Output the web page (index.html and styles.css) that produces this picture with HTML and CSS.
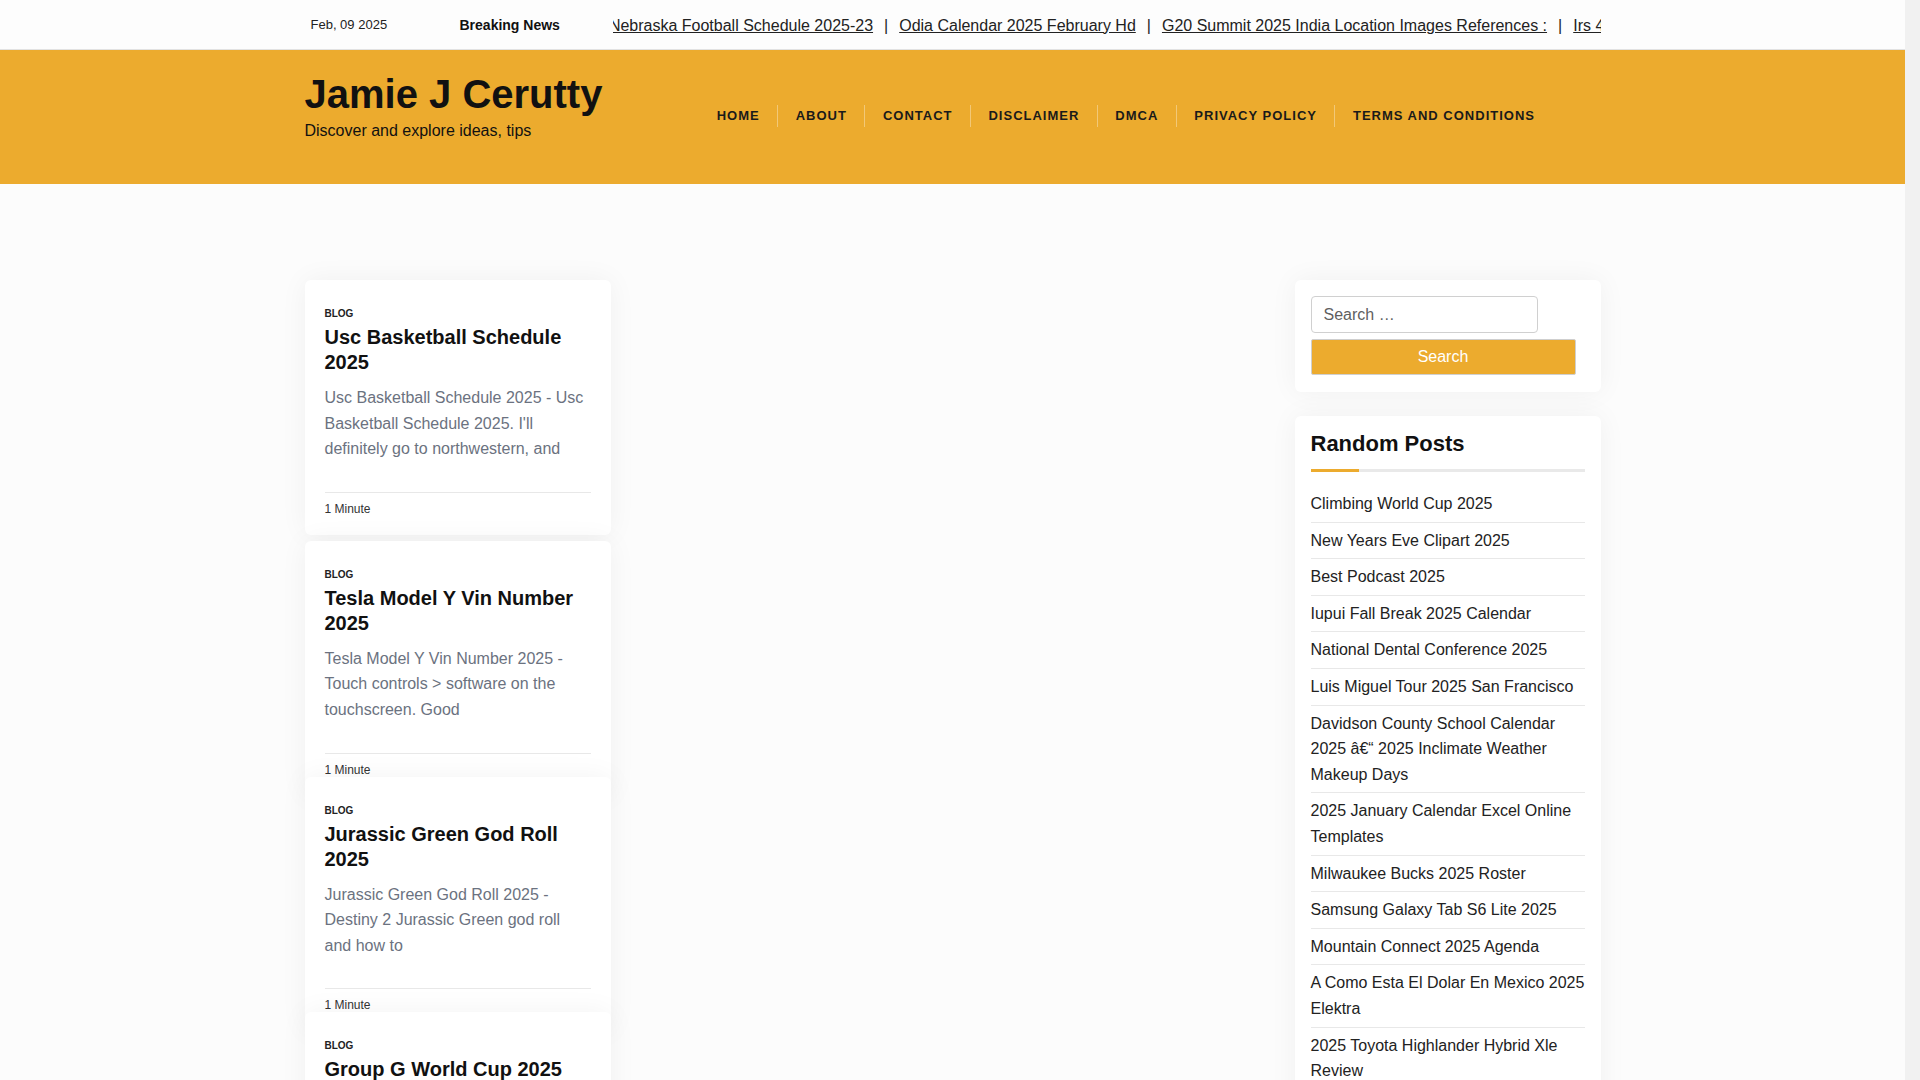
FILE: index.html
```html
<!DOCTYPE html>
<html lang="en">
<head>
<meta charset="utf-8">
<title>Jamie J Cerutty</title>
<link rel="stylesheet" href="styles.css">
</head>
<body>
<div class="topbar">
  <div class="container topbar-inner">
    <span class="date">Feb, 09 2025</span>
    <span class="breaking">Breaking News</span>
    <div class="ticker">
      <div class="ticker-track">
        <a href="#">Nebraska Football Schedule 2025-23</a><span class="sep">|</span>
        <a href="#">Odia Calendar 2025 February Hd</a><span class="sep">|</span>
        <a href="#">G20 Summit 2025 India Location Images References :</a><span class="sep">|</span>
        <a href="#">Irs 4868 Form 2025</a><span class="sep">|</span>
        <a href="#">Climbing World Cup 2025</a>
      </div>
    </div>
  </div>
</div>

<header class="masthead">
  <div class="container masthead-inner">
    <div class="brand">
      <div class="site-title">Jamie J Cerutty</div>
      <p class="tagline">Discover and explore ideas, tips</p>
    </div>
    <nav class="primary-nav">
      <ul>
        <li><a href="#">Home</a></li>
        <li><a href="#">About</a></li>
        <li><a href="#">Contact</a></li>
        <li><a href="#">Disclaimer</a></li>
        <li><a href="#">DMCA</a></li>
        <li><a href="#">Privacy Policy</a></li>
        <li><a href="#">Terms and Conditions</a></li>
      </ul>
    </nav>
  </div>
</header>

<main class="container content">
  <div class="posts">
    <article class="card">
      <span class="cat">Blog</span>
      <h2 class="card-title">Usc Basketball Schedule 2025</h2>
      <p class="excerpt">Usc Basketball Schedule 2025 - Usc Basketball Schedule 2025. I'll definitely go to northwestern, and</p>
      <div class="card-meta">1 Minute</div>
    </article>
    <article class="card">
      <span class="cat">Blog</span>
      <h2 class="card-title">Tesla Model Y Vin Number 2025</h2>
      <p class="excerpt">Tesla Model Y Vin Number 2025 - Touch controls &gt; software on the touchscreen. Good</p>
      <div class="card-meta">1 Minute</div>
    </article>
    <article class="card card--tucked">
      <span class="cat">Blog</span>
      <h2 class="card-title">Jurassic Green God Roll 2025</h2>
      <p class="excerpt">Jurassic Green God Roll 2025 - Destiny 2 Jurassic Green god roll and how to</p>
      <div class="card-meta">1 Minute</div>
    </article>
    <article class="card card--tucked">
      <span class="cat">Blog</span>
      <h2 class="card-title">Group G World Cup 2025</h2>
      <p class="excerpt">Group G World Cup 2025 - The full fixture list, kick-off times and venues for</p>
      <div class="card-meta">1 Minute</div>
    </article>
  </div>

  <aside class="sidebar">
    <section class="widget widget-search">
      <form class="search-form" action="#">
        <input class="search-field" type="search" placeholder="Search …">
        <button class="search-submit" type="button">Search</button>
      </form>
    </section>
    <section class="widget">
      <h2 class="widget-title">Random Posts</h2>
      <div class="widget-rule"></div>
      <ul class="post-list">
        <li><a href="#">Climbing World Cup 2025</a></li>
        <li><a href="#">New Years Eve Clipart 2025</a></li>
        <li><a href="#">Best Podcast 2025</a></li>
        <li><a href="#">Iupui Fall Break 2025 Calendar</a></li>
        <li><a href="#">National Dental Conference 2025</a></li>
        <li><a href="#">Luis Miguel Tour 2025 San Francisco</a></li>
        <li><a href="#">Davidson County School Calendar 2025 â€“ 2025 Inclimate Weather Makeup Days</a></li>
        <li><a href="#">2025 January Calendar Excel Online Templates</a></li>
        <li><a href="#">Milwaukee Bucks 2025 Roster</a></li>
        <li><a href="#">Samsung Galaxy Tab S6 Lite 2025</a></li>
        <li><a href="#">Mountain Connect 2025 Agenda</a></li>
        <li><a href="#">A Como Esta El Dolar En Mexico 2025 Elektra</a></li>
        <li><a href="#">2025 Toyota Highlander Hybrid Xle Review</a></li>
        <li><a href="#">Odia Calendar 2025 February Hd</a></li>
      </ul>
    </section>
  </aside>
</main>
</body>
</html>
```

FILE: styles.css
```css
/* the reference was captured with a 15px classic scrollbar gutter */
html {
  background: #f1f1f1;
}

body {
  margin: 0 15px 0 0;
  background: #fcfcfc;
  font-family: "Liberation Sans", Arial, sans-serif;
  color: #222;
}

.container {
  width: 1296px;
  margin: 0 auto;
}

/* top bar */
.topbar {
  background: #fdfdfd;
  border-bottom: 1px solid #e2e2e2;
}

.topbar-inner {
  display: flex;
  align-items: center;
  height: 49px;
}

.date {
  flex: 0 0 149px;
  margin-left: 6px;
  font-size: 13px;
  color: #222;
}

.breaking {
  flex: 0 0 auto;
  margin-right: 53px;
  font-size: 14px;
  font-weight: 700;
  color: #111;
}

.ticker {
  flex: 1;
  overflow: hidden;
  white-space: nowrap;
  padding-top: 2px;
}

.ticker-track {
  display: flex;
  margin-left: -4px;
}

.ticker-track a {
  flex: 0 0 auto;
  font-size: 16px;
  color: #222;
  text-decoration: underline;
}

.sep {
  flex: 0 0 auto;
  margin: 0 11px;
  font-size: 16px;
  color: #222;
}

/* masthead */
.masthead {
  background: #ecab2e;
  height: 134px;
}

.masthead-inner {
  display: flex;
  align-items: flex-start;
  padding-top: 20px;
}

.site-title {
  font-size: 40px;
  line-height: 48px;
  font-weight: 700;
  color: #111;
}

.tagline {
  margin: 3px 0 0;
  font-size: 16px;
  line-height: 20px;
  color: #111;
}

.primary-nav {
  margin-left: auto;
  margin-right: 48px;
  margin-top: 35px;
}

.primary-nav ul {
  display: flex;
  list-style: none;
  margin: 0;
  padding: 0;
}

.primary-nav li + li {
  border-left: 1px solid rgba(255, 255, 255, 0.35);
}

.primary-nav a {
  display: block;
  padding: 0 17.5px;
  line-height: 22px;
  font-size: 13px;
  font-weight: 700;
  letter-spacing: 1px;
  text-transform: uppercase;
  color: #1a1a1a;
  text-decoration: none;
}

/* content */
.content {
  display: flex;
  justify-content: space-between;
  align-items: flex-start;
  padding-top: 96px;
  padding-bottom: 40px;
}

.posts {
  width: 306px;
  display: flex;
  flex-direction: column;
}

.card {
  position: relative;
  background: #fff;
  border-radius: 6px;
  box-shadow: 0 0 28px rgba(0, 0, 0, 0.05);
  padding: 27px 20px 19px;
}

.card + .card {
  margin-top: 6px;
}

.card.card--tucked {
  margin-top: -19px;
}

.cat {
  display: block;
  font-size: 10px;
  line-height: 13px;
  font-weight: 700;
  text-transform: uppercase;
  color: #222;
}

.card-title {
  margin: 5px 0 0;
  font-size: 20px;
  line-height: 25px;
  font-weight: 700;
  color: #111;
}

.excerpt {
  margin: 10px 0 30px;
  font-size: 16px;
  line-height: 25.6px;
  color: #6b7280;
}

.card-meta {
  border-top: 1px solid #e8e8e8;
  padding-top: 9px;
  font-size: 12px;
  line-height: 14px;
  color: #333;
}

/* sidebar */
.sidebar {
  width: 306px;
}

.widget {
  background: #fff;
  border-radius: 6px;
  box-shadow: 0 0 28px rgba(0, 0, 0, 0.05);
  padding: 15px 16px 17px;
}

.widget-search {
  padding-top: 16px;
}

.widget + .widget {
  margin-top: 24px;
}

.search-field {
  display: block;
  box-sizing: border-box;
  width: 227px;
  height: 37px;
  padding: 0 12px;
  border: 1px solid #d0d0d0;
  border-radius: 4px;
  background: #fff;
  font-family: "Liberation Sans", Arial, sans-serif;
  font-size: 16px;
  color: #555;
}

.search-field::placeholder {
  color: #5f5f5f;
}

.search-submit {
  display: block;
  box-sizing: border-box;
  width: 265px;
  height: 36px;
  margin-top: 6px;
  border: 1px solid #cfcfcf;
  border-radius: 2px;
  background: #ecab2e;
  font-family: "Liberation Sans", Arial, sans-serif;
  font-size: 16px;
  color: #fff;
}

.widget-title {
  margin: 0;
  font-size: 22px;
  line-height: 26px;
  font-weight: 700;
  color: #111;
}

.widget-rule {
  margin-top: 12px;
  height: 3px;
  background: linear-gradient(to right, #ecab2e 0 48px, #e9e9e9 48px 100%);
}

.post-list {
  list-style: none;
  margin: 14px 0 0;
  padding: 0;
}

.post-list li {
  padding: 5px 0;
  border-bottom: 1px solid #e8e8e8;
  font-size: 16px;
  line-height: 25.6px;
}

.post-list a {
  color: #222;
  text-decoration: none;
}
```
